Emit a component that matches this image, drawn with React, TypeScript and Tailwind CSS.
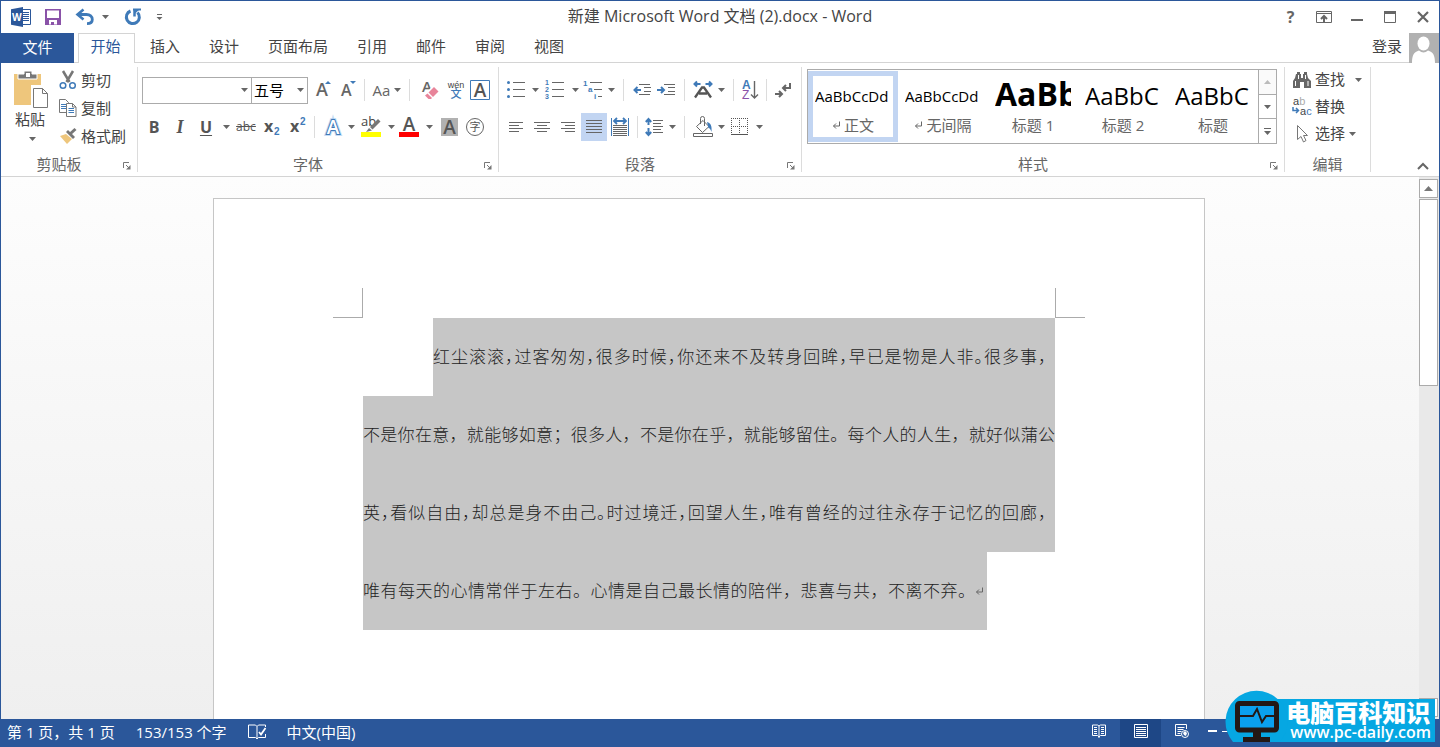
import React from 'react';
import clsx from 'clsx';

type ChildrenProps = { children?: React.ReactNode; className?: string };

const BLUE = '#3f7ab8';
const GRAY = '#666666';
const SMALL_FONT = 'Liberation Sans, Noto Sans CJK SC, sans-serif';

/* ---------- small building blocks ---------- */

function Icon({ w = 20, h = 20, children }: { w?: number; h?: number; children: React.ReactNode }) {
  return (
    <svg width={w} height={h} viewBox={`0 0 ${w} ${h}`} fill="none" className="shrink-0 overflow-visible" aria-hidden="true">
      {children}
    </svg>
  );
}

function Caret({ light = false }: { light?: boolean }) {
  return (
    <Icon w={7} h={4}>
      <path d="M0 0h7L3.5 4z" fill={light ? '#bbbbbb' : GRAY} />
    </Icon>
  );
}

function Tool({ label, className, children }: ChildrenProps & { label: string }) {
  return (
    <button type="button" aria-label={label} className={clsx('flex h-7 shrink-0 items-center justify-center', className)}>
      {children}
    </button>
  );
}

function Sep({ className = 'mx-1' }: { className?: string }) {
  return <div className={clsx('h-[22px] w-px shrink-0 bg-[#dcdcdc]', className)} />;
}

function Lines({ rows }: { rows: [number, number, number][] }) {
  return (
    <g stroke={GRAY} shapeRendering="crispEdges">
      {rows.map(([x1, x2, y]) => (
        <path key={`${x1}-${y}`} d={`M${x1} ${y + 0.5}H${x2}`} />
      ))}
    </g>
  );
}

function Launcher({ label }: { label: string }) {
  return (
    <button type="button" aria-label={label} className="absolute right-1.5 bottom-0.5">
      <Icon w={8} h={8}>
        <path d="M0.5 6V0.5H6" stroke="#777" />
        <path d="M3 3l3 3" stroke="#777" />
        <path d="M7.5 3v4.5H3z" fill="#777" />
      </Icon>
    </button>
  );
}

function Group({ title, launcher = true, className, children }: ChildrenProps & { title: string; launcher?: boolean }) {
  return (
    <section aria-label={title} className={clsx('relative flex shrink-0 flex-col border-r border-[#dcdcdc]', className)}>
      {children}
      <div className="mt-auto flex h-4 items-center justify-center text-[15px] text-[#666]">
        <span className={clsx(launcher && 'mr-5')}>{title}</span>
      </div>
      {launcher && <Launcher label={`${title}设置`} />}
    </section>
  );
}

function ToolRow({ children }: ChildrenProps) {
  return <div className="mt-[9px] flex h-7 items-center pl-1 text-[#555]">{children}</div>;
}

/* ---------- title bar ---------- */

function TitleBar() {
  return (
    <header className="relative flex h-8 shrink-0 items-center justify-between pl-1">
      <div className="flex items-center">
        <Tool label="Word" className="w-8">
          <Icon>
            <path d="M9 2.5h10.5v15H9z" fill="#fff" stroke="#2b579a" />
            <path d="M11 5.5h7M11 7.5h7M11 9.5h7M11 11.5h7M11 13.5h7" stroke="#2b579a" />
            <path d="M0 2.2L12 0v20L0 17.8z" fill="#2b579a" />
            <text x="1" y="14" fill="#fff" fontSize="10" fontWeight="700">W</text>
          </Icon>
        </Tool>
        <Tool label="保存" className="w-8">
          <Icon w={16} h={16}>
            <path d="M0 0h16v16H0z" fill="#8a52a8" />
            <path d="M2 1.500h12v7.500h-12z" fill="#fff" />
            <path d="M4 11h8v4.500H4z" fill="#fff" />
            <path d="M6 13h3v3H6z" fill="#8a52a8" />
          </Icon>
        </Tool>
        <Tool label="撤消" className="w-8">
          <Icon w={18} h={16}>
            <path d="M2 5.500h8.500c3.500 0 5.800 2 5.800 5s-2.300 4.200-5.300 4.200" stroke={BLUE} strokeWidth="2.800" />
            <path d="M7.500 0.500L1.500 5.500l6 5" stroke={BLUE} strokeWidth="2.600" />
          </Icon>
        </Tool>
        <Tool label="撤消选项" className="w-2"><Caret /></Tool>
        <Tool label="恢复" className="ml-2 w-8">
          <Icon w={18} h={18}>
            <path d="M6.500 3A6.500 6.500 0 1 0 13.500 4.500" stroke={BLUE} strokeWidth="3" />
            <path d="M9 1.500h8" stroke={BLUE} strokeWidth="2" />
            <path d="M10.500 1v7.500" stroke={BLUE} strokeWidth="2.500" />
            <path d="M10 1h6l-6 5.500z" fill={BLUE} />
          </Icon>
        </Tool>
        <Tool label="自定义快速访问工具栏" className="w-5">
          <Icon w={7} h={8}>
            <path d="M1 1.500h5" stroke={GRAY} />
            <path d="M0.500 4h6l-3 3z" fill={GRAY} />
          </Icon>
        </Tool>
      </div>

      <h1 className="absolute left-1/2 -translate-x-1/2 pb-0.5 text-base whitespace-nowrap text-[#444]">
        新建 Microsoft Word 文档 (2).docx - Word
      </h1>

      <div className="flex items-center">
        <Tool label="帮助" className="w-[33px] text-base font-bold text-[#666]">?</Tool>
        <Tool label="功能区显示选项" className="w-[33px]">
          <Icon w={16} h={12}>
            <path d="M0.500 0.500h15v11H0.500zM1 2.500h14" stroke={GRAY} />
            <path d="M8 5v6M5 8l3-3 3 3" stroke={GRAY} strokeWidth="2" />
          </Icon>
        </Tool>
        <Tool label="最小化" className="w-[33px]">
          <Icon w={12} h={12}><path d="M0 9h12" stroke={GRAY} strokeWidth="2" /></Icon>
        </Tool>
        <Tool label="最大化" className="w-[33px]">
          <Icon w={12} h={12}>
            <path d="M0.500 0.500h11v11H0.500z" stroke={GRAY} />
            <path d="M0 1.500h12" stroke={GRAY} strokeWidth="3" />
          </Icon>
        </Tool>
        <Tool label="关闭" className="w-[33px]">
          <Icon w={12} h={12}><path d="M1 1l10 10M11 1L1 11" stroke={GRAY} strokeWidth="2.200" /></Icon>
        </Tool>
      </div>
    </header>
  );
}

const TABS = ['插入', '设计', '页面布局', '引用', '邮件', '审阅', '视图'];

function TabBar() {
  return (
    <nav className="flex h-[30px] shrink-0 text-[15px] text-[#444]">
      <button type="button" className="h-[30px] w-[73px] bg-[#2b579a] pb-0.5 text-white">文件</button>
      <div className="w-1 border-b border-[#d4d4d4]" />
      <button type="button" className="w-[57px] border border-b-0 border-[#d4d4d4] pr-0.5 pb-1 text-[#2b579a]">开始</button>
      <div className="flex flex-1 items-center justify-between border-b border-[#d4d4d4] pb-0.5 pl-px">
        <div className="flex gap-px">
          {TABS.map((tab) => (
            <button key={tab} type="button" className="px-[14px]">{tab}</button>
          ))}
        </div>
        <a href="#login" className="px-[7px]">登录</a>
      </div>
      <svg width="30" height="30" viewBox="0 0 30 30" aria-hidden="true">
        <path d="M0 0h30v30H0z" fill="#b1b1b1" />
        <ellipse cx="14.500" cy="10.500" rx="6" ry="7" fill="#fff" />
        <path d="M3 30c0-8 2-11 7-12.500 3 2.500 6 2.500 9 0 5 1.500 7 4.500 7 12.500z" fill="#fff" />
      </svg>
    </nav>
  );
}

/* ---------- ribbon groups ---------- */

function ClipboardGroup() {
  return (
    <Group title="剪贴板" className="w-[137px]">
      <div className="flex">
        <button type="button" className="flex w-[58px] flex-col items-center pt-0.5 text-[15px] leading-5 text-[#444]">
          <Icon w={32} h={40}>
            <path d="M0 5h27v31H0z" fill="#eec67c" />
            <path d="M4 10V5h6V2h8v3h5v5z" fill="#777" stroke="#fff" />
            <path d="M12 4h4v4h-4z" fill="#fff" />
            <path d="M17 16h18v24H17z" fill="#fff" />
            <path d="M19.500 19.500h9l5 5v14h-14z" fill="#fff" stroke="#777" />
            <path d="M28.500 19.500v5h5" stroke="#777" />
          </Icon>
          <span>粘贴</span>
          <span className="mt-2 ml-1"><Caret /></span>
        </button>
        <div className="flex flex-col text-[15px] text-[#444]">
          <button type="button" className="flex h-7 items-center gap-1 pb-0.5">
            <Icon w={18} h={20}>
              <path d="M4 1l6.500 11M14 1L7.500 12" stroke="#777" strokeWidth="2.500" />
              <circle cx="4" cy="15.500" r="2.800" stroke={BLUE} strokeWidth="1.500" />
              <circle cx="13.500" cy="15.500" r="2.800" stroke={BLUE} strokeWidth="1.500" />
            </Icon>
            剪切
          </button>
          <button type="button" className="flex h-7 items-center gap-1 pb-0.5">
            <Icon w={18} h={18}>
              <path d="M0.500 0.500h6l3 3v10h-9z" fill="#fff" stroke="#777" />
              <path d="M2 5.500h5M2 7.500h5M2 9.500h5" stroke={BLUE} />
              <path d="M7.500 4.500h6l3.500 3.500v9.500H7.500z" fill="#fff" stroke="#777" />
              <path d="M9.500 9.500h5.500M9.500 11.500h5.500M9.500 13.500h5.500" stroke={BLUE} />
              <path d="M13.500 4.500V8H17" stroke="#777" />
            </Icon>
            复制
          </button>
          <button type="button" className="flex h-7 items-center gap-1 pb-0.5">
            <Icon w={18} h={18}>
              <path d="M1 9l6-2 6 5-5 5z" fill="#eec67c" />
              <path d="M7 5l2-2 7 7-2 2z" fill="#777" />
              <path d="M11.500 6.500L16.500 2" stroke="#777" strokeWidth="3" />
            </Icon>
            格式刷
          </button>
        </div>
      </div>
    </Group>
  );
}

function FontGroup() {
  return (
    <Group title="字体" className="w-[361px]">
      <ToolRow>
        <div className="relative">
          <select aria-label="字体" className="block h-[27px] w-[110px] appearance-none border border-[#ababab] bg-white" />
          <span className="pointer-events-none absolute top-[11px] right-1"><Caret /></span>
        </div>
        <div className="relative -ml-px">
          <select aria-label="字号" className="block h-[27px] w-[57px] appearance-none border border-[#ababab] bg-white px-0.5 text-[15px] text-black">
            <option>五号</option>
          </select>
          <span className="pointer-events-none absolute top-[11px] right-1"><Caret /></span>
        </div>
        <Tool label="增大字号" className="w-7">
          <Icon>
            <text x="4" y="16" fontSize="18" fontWeight="600" fill={GRAY}>A</text>
            <path d="M13 4l3-3 3 3z" fill={BLUE} />
          </Icon>
        </Tool>
        <Tool label="减小字号" className="w-6">
          <Icon>
            <text x="3" y="16" fontSize="16" fontWeight="600" fill={GRAY}>A</text>
            <path d="M12 1h6l-3 3z" fill={BLUE} />
          </Icon>
        </Tool>
        <Sep />
        <Tool label="更改大小写" className="w-9 gap-1 text-[15px] font-medium text-[#666]">Aa<Caret /></Tool>
        <Sep />
        <Tool label="清除所有格式" className="w-8">
          <Icon>
            <text x="2" y="12" fontSize="15" fontWeight="600" fill={GRAY}>A</text>
            <path d="M4 14l9-8 6 5-8 8H8l-4-3z" fill="#fff" />
            <path d="M8.500 12.500L14 7l4.500 4.500-5.500 5.500z" fill="#e8849a" />
            <path d="M7.500 13.500l4.500 4.500-1 1H8.500L5 15.500z" fill="#e8849a" />
          </Icon>
        </Tool>
        <Tool label="拼音指南" className="w-5">
          <Icon>
            <text x="10" y="8" textAnchor="middle" fontSize="9" fontFamily={SMALL_FONT} fill="#444">wén</text>
            <text x="10" y="18" textAnchor="middle" fontSize="11" fontWeight="500" fontFamily={SMALL_FONT} fill={BLUE}>文</text>
          </Icon>
        </Tool>
        <Tool label="字符边框" className="w-7">
          <Icon>
            <path d="M0.500 0.500h19v19H0.500z" stroke={BLUE} />
            <text x="10" y="16.500" textAnchor="middle" fontSize="19" fontWeight="600" fill="#555">A</text>
          </Icon>
        </Tool>
      </ToolRow>

      <ToolRow>
        <Tool label="加粗" className="w-6 text-base font-bold">B</Tool>
        <Tool label="倾斜" className="w-7 font-['Liberation_Serif',serif] text-lg font-bold italic">I</Tool>
        <Tool label="下划线" className="w-6 text-base font-bold underline underline-offset-2">U</Tool>
        <Tool label="下划线选项" className="w-4"><Caret /></Tool>
        <Tool label="删除线" className="w-6 text-xs line-through">abc</Tool>
        <Tool label="下标" className="w-7">
          <Icon>
            <text x="2" y="15" fontSize="16" fontWeight="700" fill="#555">x</text>
            <text x="12" y="18" fontSize="10" fontWeight="700" fontFamily={SMALL_FONT} fill={BLUE}>2</text>
          </Icon>
        </Tool>
        <Tool label="上标" className="w-6">
          <Icon>
            <text x="2" y="15" fontSize="16" fontWeight="700" fill="#555">x</text>
            <text x="12" y="8" fontSize="10" fontWeight="700" fontFamily={SMALL_FONT} fill={BLUE}>2</text>
          </Icon>
        </Tool>
        <Sep />
        <Tool label="文本效果和版式" className="w-7">
          <Icon>
            <text x="10" y="17" textAnchor="middle" fontSize="19" fontWeight="600" fill="#fff" stroke="#c5dcf4" strokeWidth="4">A</text>
            <text x="10" y="17" textAnchor="middle" fontSize="19" fontWeight="600" fill="#fff" stroke="#3f7ab8" strokeWidth="2">A</text>
            <text x="10" y="17" textAnchor="middle" fontSize="19" fontWeight="600" fill="#fff">A</text>
          </Icon>
        </Tool>
        <Tool label="文本效果选项" className="w-2"><Caret /></Tool>
        <Tool label="以不同颜色突出显示文本" className="w-8">
          <Icon>
            <text x="0" y="9" fontSize="13" fill="#444">ab</text>
            <path d="M9 10l8-8 2.500 2.500-8 8z" fill="#777" />
            <path d="M8 11l3 2.500-6 1.500z" fill="#777" />
            <path d="M0 15h20v5H0z" fill="#ffff00" />
          </Icon>
        </Tool>
        <Tool label="突出显示颜色" className="w-2"><Caret /></Tool>
        <Tool label="字体颜色" className="w-7">
          <Icon>
            <text x="10" y="13.500" textAnchor="middle" fontSize="19" fontWeight="600" fill="#555">A</text>
            <path d="M0 15h20v5H0z" fill="#ff0000" />
          </Icon>
        </Tool>
        <Tool label="字体颜色选项" className="w-3"><Caret /></Tool>
        <Tool label="字符底纹" className="w-7">
          <Icon w={17} h={18}>
            <path d="M0 0h17v18H0z" fill="#b1b1b1" />
            <text x="8.500" y="15.500" textAnchor="middle" fontSize="19" fontWeight="600" fill="#555">A</text>
          </Icon>
        </Tool>
        <Tool label="带圈字符" className="w-6">
          <Icon>
            <circle cx="10" cy="10" r="8.500" stroke={GRAY} />
            <text x="10" y="14" textAnchor="middle" fontSize="11" fontFamily={SMALL_FONT} fill="#555">字</text>
          </Icon>
        </Tool>
      </ToolRow>
    </Group>
  );
}

function ParagraphGroup() {
  return (
    <Group title="段落" className="w-[303px]">
      <ToolRow>
        <Tool label="项目符号" className="w-7">
          <Icon>
            <g fill={BLUE}>
              <circle cx="1.500" cy="2.500" r="1.500" />
              <circle cx="1.500" cy="9.500" r="1.500" />
              <circle cx="1.500" cy="16.500" r="1.500" />
            </g>
            <Lines rows={[[6, 18, 2], [6, 18, 9], [6, 18, 16]]} />
          </Icon>
        </Tool>
        <Tool label="项目符号选项" className="w-2"><Caret /></Tool>
        <Tool label="编号" className="w-8">
          <Icon>
            <g fill={BLUE} fontSize="7" fontWeight="700" fontFamily={SMALL_FONT}>
              <text x="0" y="5">1</text>
              <text x="0" y="12">2</text>
              <text x="0" y="19">3</text>
            </g>
            <Lines rows={[[7, 19, 2], [7, 19, 9], [7, 19, 16]]} />
          </Icon>
        </Tool>
        <Tool label="编号选项" className="w-2"><Caret /></Tool>
        <Tool label="多级列表" className="w-7">
          <Icon>
            <g fill={BLUE} fontSize="8" fontWeight="700" fontFamily={SMALL_FONT}>
              <text x="0" y="6">1</text>
              <text x="5" y="12">a</text>
              <text x="11" y="19">i</text>
            </g>
            <Lines rows={[[7, 19, 2], [11, 19, 9], [15, 19, 16]]} />
          </Icon>
        </Tool>
        <Tool label="多级列表选项" className="w-2"><Caret /></Tool>
        <Sep className="mx-2" />
        <Tool label="减少缩进量" className="w-5">
          <Icon w={18} h={12}>
            <path d="M8 6H2M4.500 3L1.500 6l3 3" stroke={BLUE} strokeWidth="2" />
            <Lines rows={[[6, 17, 0], [11, 18, 3], [11, 18, 7], [6, 17, 10]]} />
          </Icon>
        </Tool>
        <Tool label="增加缩进量" className="w-7">
          <Icon w={18} h={12}>
            <path d="M0 6h7M4 3l3 3-3 3" stroke={BLUE} strokeWidth="2" />
            <Lines rows={[[7, 18, 0], [11, 18, 3], [11, 18, 7], [7, 18, 10]]} />
          </Icon>
        </Tool>
        <Sep />
        <Tool label="中文版式" className="w-7">
          <Icon>
            <path d="M7.500 4H2M4 1.500L1.500 4 4 6.500M12.500 4H18M16 1.500L18.500 4 16 6.500" stroke={BLUE} strokeWidth="2" />
            <path d="M2 17.500L9 7.500h2l7 10M6 13.500h8" stroke="#555" strokeWidth="2.300" />
          </Icon>
        </Tool>
        <Tool label="中文版式选项" className="mr-1 w-2"><Caret /></Tool>
        <Sep />
        <Tool label="排序" className="w-6">
          <Icon>
            <text x="2" y="9" fontSize="12" fontWeight="700" fontFamily={SMALL_FONT} fill={BLUE}>A</text>
            <text x="2" y="19" fontSize="12" fontFamily={SMALL_FONT} fill="#8a52a8">Z</text>
            <path d="M14.500 1v17M11 14.500l3.500 3.500 3.500-3.500" stroke={GRAY} strokeWidth="1.400" />
          </Icon>
        </Tool>
        <Sep />
        <Tool label="显示/隐藏编辑标记" className="w-6">
          <Icon w={18} h={16}>
            <path d="M16 1v5H9M12 3L9 6l3 3" stroke={GRAY} strokeWidth="2" />
            <path d="M1 12h7M5 9l3 3-3 3" stroke={GRAY} strokeWidth="2" />
          </Icon>
        </Tool>
      </ToolRow>

      <ToolRow>
        <Tool label="左对齐" className="w-[26px]">
          <Icon w={14} h={10}><Lines rows={[[0, 14, 0], [0, 10, 3], [0, 14, 6], [0, 10, 9]]} /></Icon>
        </Tool>
        <Tool label="居中" className="w-[26px]">
          <Icon w={16} h={10}><Lines rows={[[0, 16, 0], [3, 13, 3], [0, 16, 6], [3, 13, 9]]} /></Icon>
        </Tool>
        <Tool label="右对齐" className="w-[26px]">
          <Icon w={14} h={10}><Lines rows={[[0, 14, 0], [4, 14, 3], [0, 14, 6], [4, 14, 9]]} /></Icon>
        </Tool>
        <Tool label="两端对齐" className="w-[26px] bg-[#c2d5f2]">
          <Icon w={16} h={14}><Lines rows={[[0, 16, 0], [0, 16, 3], [0, 16, 6], [0, 16, 9], [0, 16, 12]]} /></Icon>
        </Tool>
        <Tool label="分散对齐" className="w-[26px]">
          <Icon w={18} h={20}>
            <path d="M0.500 1v18M17.500 1v18" stroke={BLUE} />
            <path d="M3 4h12M6 1L3 4l3 3M12 1l3 3-3 3" stroke={BLUE} strokeWidth="1.800" />
            <Lines rows={[[2, 16, 8], [2, 16, 10], [2, 16, 12], [2, 16, 14], [2, 16, 16], [2, 16, 18]]} />
          </Icon>
        </Tool>
        <Sep />
        <Tool label="行和段落间距" className="w-6">
          <Icon w={18} h={20}>
            <path d="M3.500 2v6M0.800 5l2.700-3 2.700 3M3.500 11v7M0.800 15l2.700 3 2.700-3" stroke={BLUE} strokeWidth="2" />
            <Lines rows={[[8, 18, 3], [8, 16, 6], [8, 18, 9], [8, 16, 12], [8, 18, 15]]} />
          </Icon>
        </Tool>
        <Tool label="行距选项" className="w-3"><Caret /></Tool>
        <Sep className="mx-1.5" />
        <Tool label="底纹" className="w-6">
          <Icon>
            <path d="M3.500 9.500L10 3.500l6 6-6.500 6z" stroke={GRAY} />
            <path d="M7.500 7V1.500a2 2 0 0 1 4 0V9" stroke={GRAY} />
            <path d="M14 5c4 1 5 4 4.500 10-1-2-1-3.500-3-4z" fill={BLUE} />
            <path d="M0.500 16.500h19v3H0.500z" fill="#fff" stroke={GRAY} />
          </Icon>
        </Tool>
        <Tool label="底纹选项" className="w-3"><Caret /></Tool>
        <Tool label="边框" className="w-[26px]">
          <Icon w={18} h={18}>
            <path d="M0.500 0v17M16.500 0v17M8.500 0v17M0 0.500h17M0 8.500h17" stroke="#555" strokeDasharray="1 1" />
            <path d="M0 16.500h17" stroke="#555" />
          </Icon>
        </Tool>
        <Tool label="边框选项" className="w-3"><Caret /></Tool>
      </ToolRow>
    </Group>
  );
}

type StyleItem = { name: string; sample: string; sampleClass: string; mark?: boolean; active?: boolean };

const STYLES: StyleItem[] = [
  { name: '正文', sample: 'AaBbCcDd', sampleClass: 'text-[15px] leading-10', mark: true, active: true },
  { name: '无间隔', sample: 'AaBbCcDd', sampleClass: 'text-[15px] leading-10', mark: true },
  { name: '标题 1', sample: 'AaBb', sampleClass: 'text-[32px] leading-9 font-bold' },
  { name: '标题 2', sample: 'AaBbC', sampleClass: 'text-2xl leading-10' },
  { name: '标题', sample: 'AaBbC', sampleClass: 'text-2xl leading-10' },
];

function ReturnMark() {
  return (
    <Icon w={8} h={8}>
      <path d="M7.500 0.500v4.500H1.500M4 2.500L1.500 5 4 7.500" stroke={GRAY} />
    </Icon>
  );
}

function StylesGroup() {
  return (
    <Group title="样式" className="min-w-0 flex-1 px-[5px]">
      <div className="mt-0.5 mr-0.5 flex h-[75px] border border-[#ababab]">
        <div className="flex min-w-0 flex-1 overflow-hidden py-px">
          {STYLES.map((item) => (
            <button
              key={item.name}
              type="button"
              className={clsx(
                'flex w-[90px] shrink-0 flex-col items-center border-[5px] text-[15px] text-[#666]',
                item.active ? 'border-[#c2d5f2]' : 'border-transparent',
              )}
            >
              <span className={clsx('block h-[39px] w-[76px] overflow-hidden text-left whitespace-nowrap text-black', item.sampleClass)}>
                {item.sample}
              </span>
              <span className="flex h-5 items-center gap-1 leading-5">
                {item.mark && <ReturnMark />}
                {item.name}
              </span>
            </button>
          ))}
        </div>
        <div className="flex w-[18px] shrink-0 flex-col divide-y divide-[#ababab] border-l border-[#ababab]">
          <Tool label="上一行" className="w-full flex-1 bg-[#fafafa]"><span className="rotate-180"><Caret light /></span></Tool>
          <Tool label="下一行" className="w-full flex-1"><Caret /></Tool>
          <Tool label="其他样式" className="w-full flex-1">
            <Icon w={7} h={8}>
              <path d="M0 1.500h7" stroke={GRAY} />
              <path d="M0 4h7L3.500 8z" fill={GRAY} />
            </Icon>
          </Tool>
        </div>
      </div>
    </Group>
  );
}

function EditingGroup() {
  return (
    <Group title="编辑" launcher={false} className="w-[86px]">
      <div className="flex flex-col pl-2 text-[15px] text-[#444]">
        <button type="button" className="flex h-[27px] items-center gap-1 pb-0.5">
          <Icon w={18} h={18}>
            <path d="M4 1h3v2h1v4h2V3h1V1h3v2l1 4 3 3v7h-7v-6H7v6H0v-7l2-3 1-4h1z" fill="#666" />
            <path d="M2.500 10v5M5.500 4v4M12.500 4v4M15 10v5" stroke="#fff" />
          </Icon>
          查找
          <span className="ml-1.5"><Caret /></span>
        </button>
        <button type="button" className="flex h-[27px] items-center gap-1 pb-0.5">
          <Icon w={18} h={20}>
            <text x="0" y="8" fontSize="11" fontFamily={SMALL_FONT} fill="#444">a<tspan fill="#aaa">b</tspan></text>
            <text x="7" y="18" fontSize="11" fontFamily={SMALL_FONT} fill="#444">a<tspan fill={BLUE}>c</tspan></text>
            <path d="M0 10v3.500h5M3 11l2.500 2.500L3 16" stroke={BLUE} strokeWidth="1.500" />
          </Icon>
          替换
        </button>
        <button type="button" className="flex h-[27px] items-center gap-1 pb-0.5">
          <Icon w={18} h={20}>
            <path d="M4.500 1.500v14l3.500-3 2.500 5.500 2.500-1.500-2.500-5h4z" fill="#fff" stroke="#777" />
          </Icon>
          选择
          <Caret />
        </button>
      </div>
    </Group>
  );
}

function Ribbon() {
  return (
    <div className="flex h-[114px] shrink-0 border-b border-[#d4d4d4] py-1">
      <ClipboardGroup />
      <FontGroup />
      <ParagraphGroup />
      <StylesGroup />
      <EditingGroup />
      <div className="flex w-[68px] shrink-0 items-end justify-end">
        <button type="button" aria-label="折叠功能区" className="px-2.5 pb-0.5">
          <Icon w={12} h={8}><path d="M1 7l5-5 5 5" stroke={GRAY} strokeWidth="2" /></Icon>
        </button>
      </div>
    </div>
  );
}

/* ---------- document ---------- */

// Punctuation is set half-width on tight lines, apart from the closing one.
function TextLine({ text, tight = false, className }: { text: string; tight?: boolean; className?: string }) {
  return (
    <span className={clsx('block h-[78px] bg-[#c6c6c6] whitespace-nowrap [text-align-last:justify]', className)}>
      <span className={clsx(tight && "[font-feature-settings:'halt']")}>{text.slice(0, -1)}</span>
      {text.slice(-1)}
    </span>
  );
}

function Page() {
  return (
    <article className="mx-auto mt-[21px] w-[992px] shrink-0 self-stretch border border-b-0 border-[#c6c6c6] bg-white px-[119px] pt-[89px]">
      <div className="flex h-[30px] justify-between">
        <div className="w-[30px] border-r border-b border-[#ababab]" />
        <div className="w-[30px] border-b border-l border-[#ababab]" />
      </div>
      <p className="mx-[30px] font-['Noto_Sans_CJK_SC',sans-serif] text-[17px] leading-[76px] font-light text-[#222]">
        <TextLine tight className="ml-[70px]" text="红尘滚滚，过客匆匆，很多时候，你还来不及转身回眸，早已是物是人非。很多事，" />
        <TextLine text="不是你在意，就能够如意；很多人，不是你在乎，就能够留住。每个人的人生，就好似蒲公" />
        <TextLine tight text="英，看似自由，却总是身不由己。时过境迁，回望人生，唯有曾经的过往永存于记忆的回廊，" />
        <span className="flex w-[624px] items-center bg-[#c6c6c6]">
          <TextLine className="w-[612px]" text="唯有每天的心情常伴于左右。心情是自己最长情的陪伴，悲喜与共，不离不弃。" />
          <ReturnMark />
        </span>
      </p>
    </article>
  );
}

function ScrollBar() {
  return (
    <div className="flex w-5 shrink-0 flex-col bg-[#e9e9e9] pt-0.5 pr-px">
      <button type="button" aria-label="向上滚动" className="flex h-[19px] items-center justify-center border border-[#ababab] bg-white">
        <Icon w={9} h={5}><path d="M0 5l4.500-5L9 5z" fill="#777" /></Icon>
      </button>
      <div className="mt-px h-[187px] border border-[#ababab] bg-white" />
      <button type="button" aria-label="向下滚动" className="mt-auto mb-0.5 flex h-[19px] items-center justify-center border border-[#ababab] bg-white">
        <Icon w={9} h={5}><path d="M0 0h9L4.500 5z" fill="#777" /></Icon>
      </button>
    </div>
  );
}

/* ---------- status bar ---------- */

function StatusBar() {
  return (
    <footer className="flex h-7 shrink-0 items-center justify-between bg-[#2b579a] text-[15px] text-white">
      <div className="flex items-center gap-[21px] pb-0.5 pl-[7px] whitespace-nowrap">
        <span>第 1 页，共 1 页</span>
        <span>153/153 个字</span>
        <button type="button" aria-label="校对">
          <Icon w={18} h={16}>
            <path d="M9 2.500L7.500 1H0.500v12.500h7L9 15l1.500-1.500h7V10M9 2.500V15M9 2.500L10.500 1h7v2" stroke="#fff" />
            <path d="M11 8l2 2.500L17.500 4" stroke="#fff" strokeWidth="1.800" />
          </Icon>
        </button>
        <span>中文(中国)</span>
      </div>
      <div className="flex h-full items-center pr-[202px]">
        <Tool label="阅读视图" className="w-[42px] pb-1">
          <Icon w={14} h={14}>
            <path d="M7 2L5.500 1H0.500v10.500h5L7 13l1.500-1.500h5V1h-5zM7 2v12" stroke="#fff" />
            <path d="M2 3.500h3M2 5.500h3M2 7.500h3M2 9.500h3M9 3.500h3M9 5.500h3M9 7.500h3M9 9.500h3" stroke="#fff" />
          </Icon>
        </Tool>
        <Tool label="页面视图" className="w-[41px] bg-[#1e4786] pb-1">
          <Icon w={14} h={14}>
            <path d="M0.500 0.500h13v13H0.500zM2 3.500h10M2 5.500h10M2 7.500h10M2 9.500h10M2 11.500h10" stroke="#fff" />
          </Icon>
        </Tool>
        <Tool label="Web 版式视图" className="w-[41px] pb-1">
          <Icon w={14} h={14}>
            <path d="M6 11.500H0.500V0.500h11V5M2.500 3.500h7M2.500 5.500h6M2.500 7.500h4M2.500 9.500h3" stroke="#fff" />
            <circle cx="10" cy="10" r="3.500" fill="#2b579a" stroke="#fff" />
            <path d="M8 9l2-2 2 2-1 3-2-1z" fill="#fff" />
          </Icon>
        </Tool>
        <Tool label="缩小" className="w-5 pb-1">
          <Icon w={9} h={2}><path d="M0 1h9" stroke="#fff" strokeWidth="2" /></Icon>
        </Tool>
        <span className="mb-1 h-px w-4 bg-white" />
      </div>
    </footer>
  );
}

function SiteBadge() {
  return (
    <div className="absolute right-[5px] bottom-[5px] flex h-[43px] w-[178px] justify-end bg-[#06a7e2] text-white">
      <svg width="64" height="54" viewBox="0 0 64 54" className="absolute bottom-0 -left-8" aria-hidden="true">
        <path d="M8 54A31 31 0 1 1 55 54z" fill="#06a7e2" />
        <rect x="12.500" y="15.500" width="39" height="26.500" rx="2" fill="#0aa0ee" stroke="#231815" strokeWidth="5" />
        <path d="M14 28h14l4-7 5 13 4-6h10" fill="none" stroke="#231815" strokeWidth="2" />
        <path d="M28 43h8v6h9v5H18v-5h10z" fill="#231815" />
      </svg>
      <div className="relative flex flex-col pr-1">
        <span className="h-[25px] text-2xl leading-[27px] font-black">电脑百科知识</span>
        <a href="#site" className="pl-1 text-base leading-4 font-semibold">www.pc-daily.com</a>
      </div>
    </div>
  );
}

export default function App() {
  return (
    <div
      lang="zh-CN"
      className="relative flex h-screen flex-col overflow-hidden bg-white font-['Open_Sans','Noto_Sans_CJK_SC',sans-serif]"
    >
      <div className="flex min-h-0 flex-1 flex-col border border-b-0 border-[#2b579a]">
        <TitleBar />
        <TabBar />
        <Ribbon />
        <main className="flex min-h-0 flex-1 overflow-hidden bg-linear-to-b from-[#fdfdfd] to-[#efefef]">
          <div className="flex min-w-0 flex-1 overflow-hidden pr-0.5">
            <Page />
          </div>
          <ScrollBar />
        </main>
      </div>
      <StatusBar />
      <SiteBadge />
    </div>
  );
}
